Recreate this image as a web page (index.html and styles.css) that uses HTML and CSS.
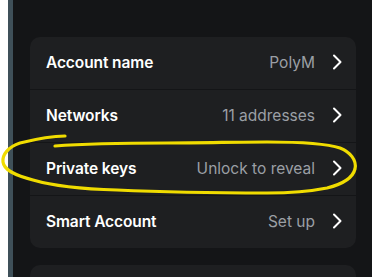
FILE: index.html
```html
<!DOCTYPE html>
<html>
<head>
<meta charset="utf-8">
<link rel="stylesheet" href="styles.css">
</head>
<body>
<div class="frame">
  <div class="edge-white"></div>
  <div class="edge-slate"></div>
  <main class="panel">
    <section class="card">
      <div class="row">
        <span class="label">Account name</span>
        <span class="value">PolyM</span>
        <svg class="chev" viewBox="0 0 10 16" width="10" height="16"><path d="M2 1.5 L8.5 8 L2 14.5" fill="none" stroke="#fff" stroke-width="2" stroke-linecap="round" stroke-linejoin="round"/></svg>
      </div>
      <div class="row">
        <span class="label">Networks</span>
        <span class="value">11 addresses</span>
        <svg class="chev" viewBox="0 0 10 16" width="10" height="16"><path d="M2 1.5 L8.5 8 L2 14.5" fill="none" stroke="#fff" stroke-width="2" stroke-linecap="round" stroke-linejoin="round"/></svg>
      </div>
      <div class="row">
        <span class="label">Private keys</span>
        <span class="value">Unlock to reveal</span>
        <svg class="chev" viewBox="0 0 10 16" width="10" height="16"><path d="M2 1.5 L8.5 8 L2 14.5" fill="none" stroke="#fff" stroke-width="2" stroke-linecap="round" stroke-linejoin="round"/></svg>
      </div>
      <div class="row">
        <span class="label">Smart Account</span>
        <span class="value">Set up</span>
        <svg class="chev" viewBox="0 0 10 16" width="10" height="16"><path d="M2 1.5 L8.5 8 L2 14.5" fill="none" stroke="#fff" stroke-width="2" stroke-linecap="round" stroke-linejoin="round"/></svg>
      </div>
    </section>
    <section class="card card-next"></section>
  </main>
  <svg class="scribble" viewBox="0 0 372 277" width="372" height="277">
    <path d="M65 136 C55 136 40 138 20 143 C8 147 2 155 3 162 C4 170 14 175 33 180 C50 185 80 189 117 190 C160 192 220 193 267 193 C290 193 312 191 327 188 C343 184 353 177 355 169 C357 160 350 152 340 148 C325 143 300 142 267 142 C240 142 200 143 167 143 C120 143 80 144 55 146" fill="none" stroke="#f0dc00" stroke-width="3.2" stroke-linecap="round" stroke-linejoin="round"/>
  </svg>
</div>
</body>
</html>
```

FILE: styles.css
```css
* { box-sizing: border-box; }
html, body {
  margin: 0;
  padding: 0;
  width: 372px;
  height: 277px;
  overflow: hidden;
  background: #141517;
  font-family: "Inter", "Liberation Sans", sans-serif;
}
.frame {
  position: relative;
  display: flex;
  width: 372px;
  height: 277px;
}
.edge-white {
  width: 8px;
  background: #ffffff;
}
.edge-slate {
  width: 5px;
  background: #3f5059;
}
.panel {
  flex: 1;
  padding: 37px 16px 0 17px;
  display: flex;
  flex-direction: column;
  gap: 17px;
  background: #141517;
}
.card {
  background: #1e1f21;
  border-radius: 10px;
}
.card-next {
  flex: 1;
  border-radius: 10px 10px 0 0;
}
.row {
  height: 52px;
  display: flex;
  align-items: center;
  padding: 0 14px 2px 16px;
}
.row + .row {
  border-top: 1px solid #141517;
  height: 53px;
}
.label {
  flex: 1;
  color: #ffffff;
  font-size: 15.5px;
  font-weight: 600;
  letter-spacing: -0.1px;
}
.value {
  color: #9b9fa5;
  font-size: 15.5px;
  font-weight: 400;
  margin-right: 17px;
}
.chev {
  display: block;
  flex: none;
}
.scribble {
  position: absolute;
  left: 0;
  top: 0;
  pointer-events: none;
}
```
